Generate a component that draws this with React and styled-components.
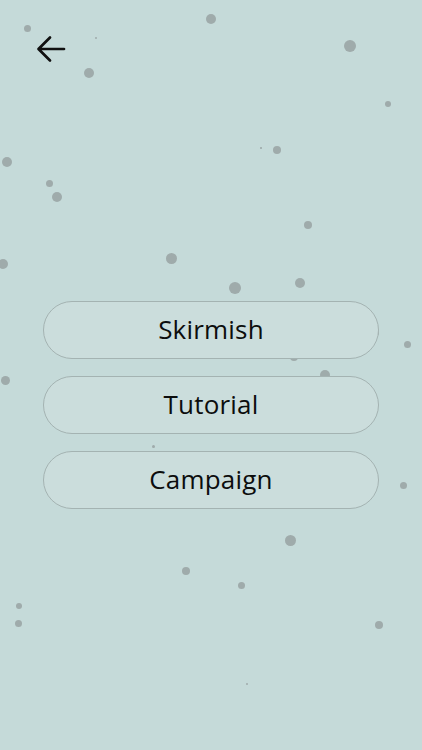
import React from 'react'
import styled, { createGlobalStyle } from 'styled-components'

const GlobalStyle = createGlobalStyle`
  html, body {
    margin: 0;
    padding: 0;
    background: #c5dad9;
  }
  * {
    box-sizing: border-box;
  }
`

const SCREEN = styled.div`
  position: relative;
  width: 100%;
  min-height: 750px;
  overflow: hidden;
  background: #c5dad9;
  font-family: "Open Sans", "Noto Sans", sans-serif;
  display: flex;
  flex-direction: column;
`

const DOTS = styled.div`
  position: absolute;
  inset: 0;
  pointer-events: none;
`

const DOT = styled.span`
  position: absolute;
  border-radius: 50%;
  background: #9fabab;
  width: ${p => p.$r * 2}px;
  height: ${p => p.$r * 2}px;
  left: ${p => p.$x - p.$r}px;
  top: ${p => p.$y - p.$r}px;
`

const HEADER = styled.header`
  position: relative;
  padding: 23px 0 0 25px;
  height: 76px;
`

const BACK = styled.button`
  width: 52px;
  height: 52px;
  padding: 0;
  border: none;
  background: transparent;
  display: flex;
  align-items: center;
  justify-content: center;
  cursor: pointer;
`

const MENU = styled.nav`
  position: relative;
  margin-top: 225px;
  display: flex;
  flex-direction: column;
  align-items: center;
  gap: 17px;
`

const MENU_BUTTON = styled.button`
  width: 336px;
  height: 58px;
  border-radius: 29px;
  border: 1px solid #a4b3b2;
  background: #cbdddc;
  color: #0c0d0d;
  font-family: "Open Sans", "Noto Sans", sans-serif;
  font-size: 26px;
  font-weight: 400;
  letter-spacing: 0.2px;
  cursor: pointer;
  display: flex;
  align-items: center;
  justify-content: center;
  padding: 0 0 2px;
`

const dots = [
  [27, 28, 3.5], [96, 38, 1.2], [89, 73, 5], [211, 19, 5], [350, 46, 6],
  [388, 104, 3], [277, 150, 4], [261, 148, 0.8], [7, 162, 5], [49, 183, 3.5],
  [57, 197, 5], [308, 225, 4], [171, 258, 5.5], [3, 264, 5], [235, 288, 6],
  [300, 283, 5], [294, 357, 4], [325, 375, 5], [376, 333, 3], [407, 344, 3.5],
  [5, 380, 4.5], [153, 446, 1.5], [403, 485, 3.5], [290, 540, 5.5], [186, 571, 4],
  [241, 585, 3.5], [19, 606, 3], [18, 623, 3.5], [379, 625, 4], [247, 684, 1],
]

const modes = ['Skirmish', 'Tutorial', 'Campaign']

const App = () => {
  return (
    <SCREEN>
      <GlobalStyle />
      <DOTS>
        {dots.map(([x, y, r], i) => (
          <DOT key={i} $x={x} $y={y} $r={r} />
        ))}
      </DOTS>

      <HEADER>
        <BACK aria-label="Back">
          <svg width="30" height="30" viewBox="0 0 30 30" fill="none">
            <path
              d="M28 15H3M14 3.5L2.5 15L14 26.5"
              stroke="#111"
              strokeWidth="2.7"
              strokeLinecap="round"
              strokeLinejoin="round"
            />
          </svg>
        </BACK>
      </HEADER>

      <MENU>
        {modes.map(m => (
          <MENU_BUTTON key={m}>{m}</MENU_BUTTON>
        ))}
      </MENU>
    </SCREEN>
  )
}

export default App
